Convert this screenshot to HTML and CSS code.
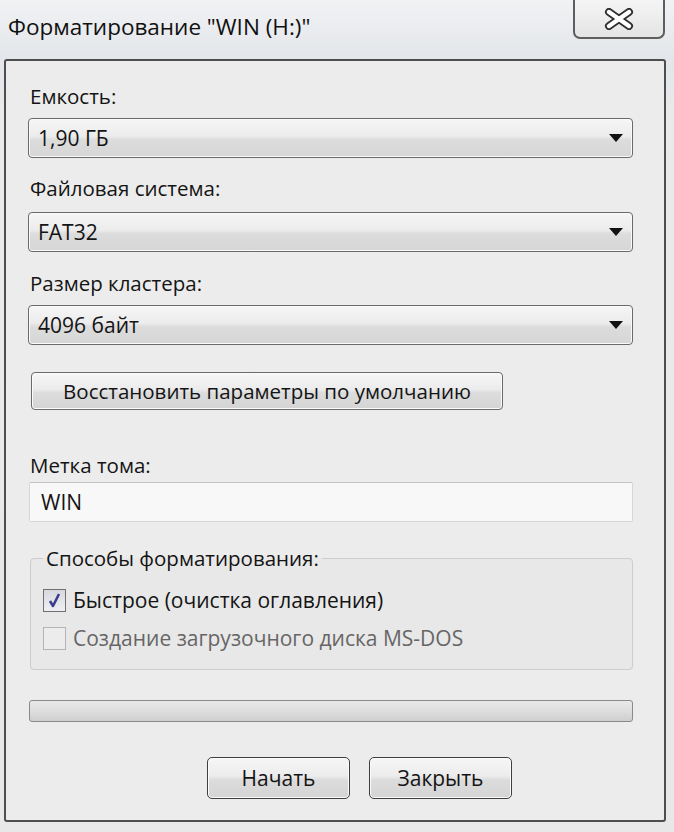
FILE: index.html
```html
<!DOCTYPE html>
<html lang="ru">
<head>
<meta charset="utf-8">
<title>Форматирование</title>
<link rel="stylesheet" href="styles.css">
</head>
<body>
<div class="window">
  <div class="titlebar">
    <div class="title">Форматирование "WIN (H:)"</div>
    <div class="close">
      <svg width="30" height="22" viewBox="0 0 30 22">
        <g stroke-linecap="round">
          <line x1="5" y1="4" x2="25" y2="18" stroke="#2e2e2e" stroke-width="8"/>
          <line x1="25" y1="4" x2="5" y2="18" stroke="#2e2e2e" stroke-width="8"/>
          <line x1="5" y1="4" x2="25" y2="18" stroke="#fff" stroke-width="4.5"/>
          <line x1="25" y1="4" x2="5" y2="18" stroke="#fff" stroke-width="4.5"/>
        </g>
      </svg>
    </div>
  </div>
  <div class="panel">
    <div class="label l1">Емкость:</div>
    <div class="combo c1"><span>1,90 ГБ</span><span class="arrow"></span></div>
    <div class="label l2">Файловая система:</div>
    <div class="combo c2"><span>FAT32</span><span class="arrow"></span></div>
    <div class="label l3">Размер кластера:</div>
    <div class="combo c3"><span>4096 байт</span><span class="arrow"></span></div>
    <div class="btn reset">Восстановить параметры по умолчанию</div>
    <div class="label l4">Метка тома:</div>
    <div class="input">WIN</div>
    <fieldset class="group">
      <legend>Способы форматирования:</legend>
      <div class="check-row r1">
        <span class="box checked">
          <svg width="17" height="17" viewBox="0 0 17 17"><path d="M4 9 L7 14 L13 2" fill="none" stroke="#3d3f8e" stroke-width="2.6" stroke-linejoin="round"/></svg>
        </span>
        <span>Быстрое (очистка оглавления)</span>
      </div>
      <div class="check-row r2 disabled">
        <span class="box"></span>
        <span>Создание загрузочного диска MS-DOS</span>
      </div>
    </fieldset>
    <div class="progress"></div>
    <div class="actions">
      <div class="btn action">Начать</div>
      <div class="btn action">Закрыть</div>
    </div>
  </div>
</div>
</body>
</html>
```

FILE: styles.css
```css
* { box-sizing: border-box; }
html, body { margin: 0; padding: 0; }
body {
  width: 674px;
  height: 832px;
  overflow: hidden;
  background: linear-gradient(#f1f2f4, #e3e6ea 58px, #e9eaeb 120px, #e8e8e8);
  font-family: "Open Sans", "Noto Sans", sans-serif;
  color: #141414;
}
.window { display: flex; flex-direction: column; height: 832px; }
.titlebar { height: 59px; display: flex; align-items: flex-start; }
.title {
  font-size: 22.5px;
  line-height: 30px;
  margin: 12px 0 0 8px;
  color: #111;
}
.close {
  margin-left: auto;
  margin-right: 9px;
  width: 92px;
  height: 39px;
  border: 2px solid #5e5e5e;
  border-top: none;
  border-radius: 0 0 7px 7px;
  background: linear-gradient(#f5f5f5, #e4e4e4);
  display: flex;
  align-items: center;
  justify-content: center;
}
.panel {
  margin: 0 8px 10px 4px;
  height: 763px;
  border: 2px solid #4e4e4e;
  border-radius: 3px;
  background: #ececec;
  padding: 21px 31px 0 22px;
  display: flex;
  flex-direction: column;
}
.label { font-size: 20.5px; line-height: 28px; padding-left: 2px; }
.l2 { margin-top: 16px; }
.l3 { margin-top: 17px; }
.l4 { margin-top: 41px; }
.combo {
  height: 40px;
  margin-top: 8px;
  border: 1.5px solid #6a6a6a;
  border-radius: 4px;
  background: linear-gradient(#f6f6f6, #ececec 45%, #dcdcdc 55%, #d6d6d6);
  box-shadow: inset 0 0 0 1px #fafafa;
  display: flex;
  align-items: center;
  justify-content: space-between;
  padding: 0 9px 0 9px;
  font-size: 21px;
}
.c2 { margin-top: 10px; }
.arrow {
  width: 0; height: 0;
  border-left: 7px solid transparent;
  border-right: 7px solid transparent;
  border-top: 8px solid #111;
}
.btn {
  border: 1.5px solid #6a6a6a;
  border-radius: 4px;
  background: linear-gradient(#f6f6f6, #ececec 45%, #dcdcdc 55%, #d4d4d4);
  box-shadow: inset 0 0 0 1px #fbfbfb;
  font-size: 21px;
  display: flex;
  align-items: center;
  justify-content: center;
}
.reset { margin: 27px 0 0 3px; width: 472px; height: 38px; font-size: 20.5px; }
.input {
  margin: 3px 0 0 1px;
  height: 40px;
  border: 1px solid #d6d6d6;
  border-top-color: #c4c4c4;
  border-radius: 2px;
  background: #f8f8f8;
  font-size: 21px;
  display: flex;
  align-items: center;
  padding-left: 11px;
}
.group {
  margin: 22px 0 0 2px;
  padding: 0 12px 17px 12px;
  border: 1px solid #cdcdcd;
  border-radius: 4px;
  background: #e8e8e8;
  min-width: 0;
}
.group legend {
  font-size: 20.5px;
  line-height: 28px;
  padding: 0 3px;
}
.check-row {
  display: flex;
  align-items: center;
  gap: 7px;
  font-size: 21px;
  line-height: 28px;
}
.r1 { margin-top: 14px; }
.r2 { margin-top: 10px; }
.disabled { color: #666; }
.box {
  width: 23px;
  height: 23px;
  border: 1.5px solid #8c8c8c;
  background: linear-gradient(#dedede, #f3f3f3);
  display: flex;
  align-items: center;
  justify-content: center;
}
.box.checked { border-color: #707070; background: linear-gradient(#d6d8de, #eef0f3); }
.disabled .box { border-color: #b4b4b4; background: #ececec; }
.progress {
  margin: 30px 0 0 1px;
  height: 22px;
  border: 1.5px solid #8a8a8a;
  border-radius: 3px;
  background: linear-gradient(#e9e9e9, #dedede 50%, #cfcfcf);
}
.actions { display: flex; gap: 19px; margin: 35px 0 0 179px; }
.action {
  width: 143px;
  height: 42px;
  border-color: #3e3e3e;
  border-radius: 5px;
}
```
